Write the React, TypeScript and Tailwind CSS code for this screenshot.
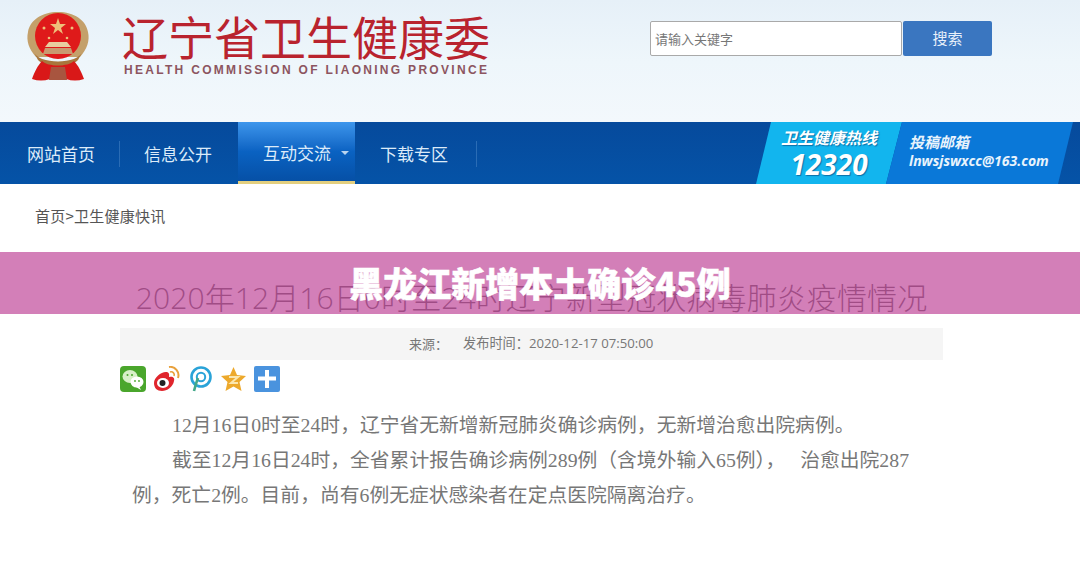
const cjk = "font-['Noto_Sans_CJK_SC','Noto_Sans',sans-serif]";

function Emblem() {
  return (
    <svg width="64" height="70" viewBox="0 0 64 70">
      <path d="M10 46 C3 38 0 30 2 21 C4 9 16 1 32 1 C48 1 60 9 62 21 C64 30 61 38 54 46 Z" fill="#c4a06a" />
      <path d="M7 40 C12 54 52 54 57 40 L52 49 C44 57 20 57 12 49 Z" fill="#a8763c" />
      <circle cx="32" cy="25" r="23" fill="#df1a1a" />
      <path d="M32 7 L34 13 L40 13 L35 17 L37 23 L32 19 L27 23 L29 17 L24 13 L30 13 Z" fill="#eec07a" />
      <circle cx="18" cy="17" r="1.5" fill="#eec07a" />
      <circle cx="46" cy="17" r="1.5" fill="#eec07a" />
      <circle cx="23" cy="27" r="1.3" fill="#eec07a" />
      <circle cx="41" cy="27" r="1.3" fill="#eec07a" />
      <path d="M23 31 L41 31 L45 36 L19 36 Z" fill="#e8cfa0" />
      <path d="M19 37 L45 37 L47 43 L17 43 Z" fill="#c99a70" />
      <path d="M16 50 C12 54 8 62 6 68 C12 70 18 70 24 68 L28 60 L36 60 L40 68 C46 70 52 70 58 68 C56 62 52 54 48 50 C42 56 22 56 16 50 Z" fill="#d91818" />
      <path d="M25 56 L39 56 L41 69 L23 69 Z" fill="#a8553f" />
    </svg>
  );
}

function ShareIcons() {
  return (
    <div className="flex items-center gap-[7px] h-[26px]">
      <svg width="26" height="26" viewBox="0 0 26 26">
        <rect width="26" height="26" rx="4" fill="#4aa62c" />
        <ellipse cx="10" cy="10.5" rx="7.5" ry="6.5" fill="#d8efc8" />
        <ellipse cx="17" cy="16" rx="6.5" ry="5.5" fill="#fff" />
        <path d="M19 20 L21 24 L16 21 Z" fill="#fff" />
        <circle cx="7.5" cy="9" r="1" fill="#4aa62c" />
        <circle cx="12" cy="9" r="1" fill="#4aa62c" />
        <circle cx="15" cy="15" r="0.9" fill="#4aa62c" />
        <circle cx="19" cy="15" r="0.9" fill="#4aa62c" />
      </svg>
      <svg width="27" height="26" viewBox="0 0 27 26">
        <path d="M1 17 C1 11 9 5 14 6 C17 7 16 10 16 11 C20 10 22 12 21 15 C20 21 14 25 9 25 C4 25 1 22 1 17 Z" fill="#e0252c" />
        <ellipse cx="10" cy="17" rx="6" ry="5" fill="#fff" />
        <circle cx="9.5" cy="17" r="3" fill="#222" />
        <path d="M16 1 C22 0 27 6 25 12" fill="none" stroke="#e8a13c" strokeWidth="2" />
        <path d="M17 6 C20 5 22 8 21 10" fill="none" stroke="#e8a13c" strokeWidth="1.6" />
      </svg>
      <svg width="25" height="26" viewBox="0 0 25 26" className="ml-[1px]">
        <circle cx="13" cy="11" r="9.5" fill="none" stroke="#2aa3d8" strokeWidth="2.6" />
        <circle cx="13" cy="11" r="4.2" fill="none" stroke="#2aa3d8" strokeWidth="2" />
        <path d="M10 12 C8 17 7 21 6 25" fill="none" stroke="#43a88a" strokeWidth="2.6" />
      </svg>
      <svg width="27" height="26" viewBox="0 0 27 26">
        <path d="M13.5 1 L17 9 L26 10 L19.5 16 L21.5 25 L13.5 20.5 L5.5 25 L7.5 16 L1 10 L10 9 Z" fill="#eda92c" />
        <path d="M9 11 L18 11 L11 17 L18 17" fill="none" stroke="#fbe6ae" strokeWidth="2" />
      </svg>
      <svg width="26" height="26" viewBox="0 0 26 26">
        <rect width="26" height="26" rx="2" fill="#4a93de" />
        <rect x="11" y="4" width="4" height="18" fill="#fff" />
        <rect x="4" y="10.5" width="18" height="4" fill="#fff" />
      </svg>
    </div>
  );
}

export default function App() {
  return (
    <div className={`relative h-[566px] w-[1080px] overflow-hidden bg-white ${cjk}`}>
      <header className="flex h-[122px] bg-gradient-to-b from-[#e6f0f8] via-[#eef6fb] to-[#f3f8fc]">
        <div className="ml-[26px] mt-[11px] w-[64px]">
          <Emblem />
        </div>
        <div className="ml-[32px] mt-[9px] w-[368px]">
          <div className="whitespace-nowrap text-[46px] leading-[52px] text-[#b9232e]">辽宁省卫生健康委</div>
          <div className="mt-[2px] whitespace-nowrap pl-[2px] font-['Liberation_Sans',sans-serif] text-[12px] font-bold leading-[14px] tracking-[2.3px] text-[#8c5560]">
            HEALTH COMMISSION OF LIAONING PROVINCE
          </div>
        </div>
        <div className="ml-[160px] mt-[21px] flex h-[35px]">
          <div className="flex w-[252px] items-center rounded-[2px] border border-[#a9a9a9] bg-white pl-[4px] text-[13px] text-[#777]">请输入关键字</div>
          <div className="ml-[1px] flex w-[89px] items-center justify-center rounded-[2px] bg-[#3a76c0] text-[15px] text-[#e8f0fa]">搜索</div>
        </div>
      </header>

      <nav className="flex h-[62px] bg-gradient-to-b from-[#064a9c] to-[#0553a7] text-[17px] text-[#dcebf9]">
        <div className="flex w-[238px] items-center pt-[2px]">
          <span className="ml-[27px] w-[93px] border-r border-[#2a6cb5] leading-[26px]">网站首页</span>
          <span className="ml-[24px]">信息公开</span>
        </div>
        <div className="flex w-[117px] items-center border-b-[3px] border-[#e3cf7f] bg-gradient-to-b from-[#3d96ec] via-[#0a62c2] to-[#0650a6] pl-[25px] pt-[2px]">
          <span>互动交流</span>
          <span className="ml-[10px] h-0 w-0 border-x-[4px] border-t-[4px] border-x-transparent border-t-[#b9d4ef]" />
        </div>
        <div className="flex items-center pt-[2px]">
          <span className="w-[122px] border-r border-[#2a6cb5] pl-[25px] leading-[26px]">下载专区</span>
        </div>
        <div className="ml-auto flex pr-[7px]">
          <div className="flex w-[146px] flex-col items-center bg-[#12b5ee] pt-[4px] italic text-white [clip-path:polygon(15px_0,100%_0,calc(100%-16px)_100%,0_100%)]">
            <span className="text-[16px] font-bold leading-[22px] [text-shadow:1px_1px_1px_#0a6fa8]">卫生健康热线</span>
            <span className="font-['Open_Sans',sans-serif] text-[28px] font-bold leading-[32px] [text-shadow:1px_1px_1px_#0a6fa8]">12320</span>
          </div>
          <div className="-ml-[16px] flex w-[187px] flex-col bg-[#0a78d8] pl-[23px] pt-[10px] italic text-[#e8f3fc] [clip-path:polygon(16px_0,100%_0,calc(100%-15px)_100%,0_100%)]">
            <span className="text-[15px] font-bold leading-[20px]">投稿邮箱</span>
            <span className="font-['Open_Sans',sans-serif] text-[14px] font-bold leading-[18px]">lnwsjswxcc@163.com</span>
          </div>
        </div>
      </nav>

      <div className="pl-[35px] pt-[20px] text-[15px] leading-[24px] tracking-[0.25px] text-[#555]">首页&gt;卫生健康快讯</div>

      <main className="ml-[120px] w-[823px]">
        <h1 className="mt-[48px] whitespace-nowrap text-center font-['Open_Sans','Noto_Sans_CJK_SC',sans-serif] text-[30px] font-light leading-[44px] tracking-[0.1px] text-[#555]">
          2020年12月16日0时至24时辽宁新型冠状病毒肺炎疫情情况
        </h1>
        <div className="mt-[8px] flex h-[32px] items-center bg-[#f5f5f5] pl-[289px] text-[13px] text-[#777]">
          <span>来源：</span>
          <span className="ml-[15px] font-['Open_Sans','Noto_Sans_CJK_SC',sans-serif] text-[13.2px]">发布时间：2020-12-17 07:50:00</span>
        </div>
        <div className="mt-[6px]">
          <ShareIcons />
        </div>
        <div className="mt-[16px] font-['Liberation_Serif','Noto_Sans_CJK_SC',serif] text-[19.8px] leading-[35px] text-[#777]">
          <p className="whitespace-nowrap pl-[52px]">12月16日0时至24时，辽宁省无新增新冠肺炎确诊病例，无新增治愈出院病例。</p>
          <p className="ml-[12px] w-[785px] indent-[40px]">截至12月16日24时，全省累计报告确诊病例289例（含境外输入65例），<span className="ml-[15px]">治愈出院287</span>例，死亡2例。目前，尚有6例无症状感染者在定点医院隔离治疗。</p>
        </div>
      </main>

      <div className="absolute left-0 top-[252px] flex h-[62px] w-full items-center justify-center bg-[#c0489a]/70">
        <span className="text-[34px] font-black leading-[40px] text-white [-webkit-text-stroke:0.5px_white]">黑龙江新增本土确诊45例</span>
      </div>
    </div>
  );
}
